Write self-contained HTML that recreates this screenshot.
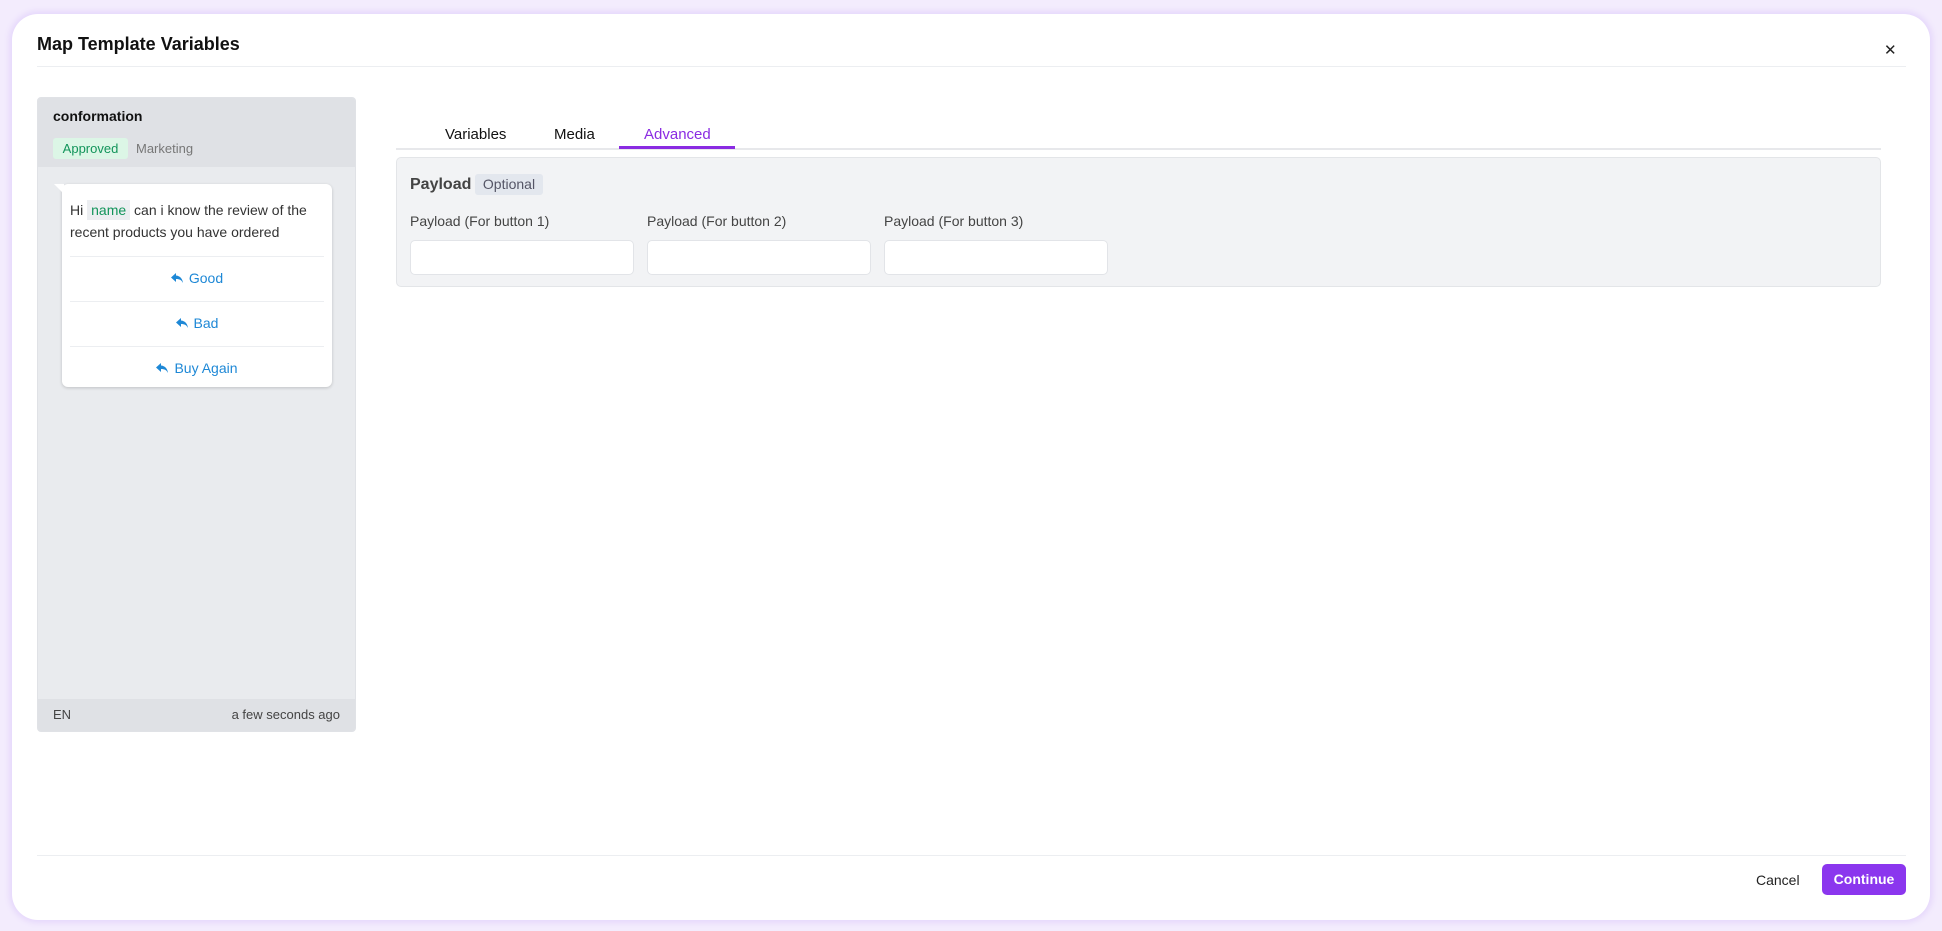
<!DOCTYPE html>
<html><head><meta charset="utf-8"><style>
*{box-sizing:border-box;margin:0;padding:0}
body{width:1942px;height:931px;background:#f3ecfd;font-family:"Liberation Sans",sans-serif;position:relative;overflow:hidden}
.modal{position:absolute;left:12px;top:14px;width:1918px;height:906px;background:#fff;border-radius:26px;box-shadow:0 0 6px 3px #e6d8fb}
.a{position:absolute}
.title{left:37px;top:34px;font-size:18px;font-weight:bold;color:#111}
.x{left:1884px;top:41px;font-size:15px;color:#222}
.hr{height:1px;background:#eceef1}
.card{left:37px;top:97px;width:319px;height:635px;background:#e9ebee;border:1px solid #e0e2e6;border-radius:4px;overflow:hidden}
.chead{left:0;top:0;width:100%;height:69px;background:#dfe1e5}
.cfoot{left:0;bottom:0;width:100%;height:32px;background:#dfe1e5;font-size:13px;color:#444}
.bubble{left:24px;top:86px;width:270px;height:203px;background:#fff;border-radius:6px;box-shadow:0 1px 3px rgba(0,0,0,.18)}
.btxt{font-size:14px;color:#333;line-height:22px}
.btn{left:8px;width:254px;text-align:center;font-size:14px;color:#1e88d6}
.btn svg{vertical-align:-1px;margin-right:6px}
.tab{font-size:15px;color:#111;top:126px}
.panel{left:396px;top:157px;width:1485px;height:130px;background:#f2f3f5;border:1px solid #e3e5e8;border-radius:5px}
.lbl{font-size:14px;color:#444;top:55px}
.inp{top:82px;width:224px;height:35px;background:#fff;border:1px solid #e2e4e8;border-radius:5px}
</style></head><body>
<div class="modal"></div>
<div class="a title">Map Template Variables</div>
<div class="a x">✕</div>
<div class="a hr" style="left:37px;top:66px;width:1869px"></div>
<div class="a card">
 <div class="a chead">
  <div class="a" style="left:15px;top:10px;font-size:14px;font-weight:bold;color:#111">conformation</div>
  <div class="a" style="left:15px;top:40px;width:75px;height:21px;background:#dcf6e6;border-radius:3px;color:#12945a;font-size:13px;line-height:21px;text-align:center">Approved</div>
  <div class="a" style="left:98px;top:43px;font-size:13px;color:#777">Marketing</div>
 </div>
 <div class="a bubble">
  <div class="a" style="left:-8px;top:0;width:0;height:0;border-top:10px solid #fff;border-left:10px solid transparent"></div>
  <div class="a btxt" style="left:8px;top:15px;width:262px">Hi <span style="background:#eceef1;color:#12945a;padding:2px 4px">name</span> can i know the review of the recent products you have ordered</div>
  <div class="a hr" style="left:8px;top:72px;width:254px"></div>
  <div class="a btn" style="top:86px"><svg width="12" height="11" viewBox="0 0 12 11"><path d="M5 0L0 4.5 5 9V6c3.5 0 5.5 1 7 4-.5-4-2.5-7-7-7.5z" fill="#1e88d6"/></svg>Good</div>
  <div class="a hr" style="left:8px;top:117px;width:254px"></div>
  <div class="a btn" style="top:131px"><svg width="12" height="11" viewBox="0 0 12 11"><path d="M5 0L0 4.5 5 9V6c3.5 0 5.5 1 7 4-.5-4-2.5-7-7-7.5z" fill="#1e88d6"/></svg>Bad</div>
  <div class="a hr" style="left:8px;top:162px;width:254px"></div>
  <div class="a btn" style="top:176px"><svg width="12" height="11" viewBox="0 0 12 11"><path d="M5 0L0 4.5 5 9V6c3.5 0 5.5 1 7 4-.5-4-2.5-7-7-7.5z" fill="#1e88d6"/></svg>Buy Again</div>
 </div>
 <div class="a cfoot"><span class="a" style="left:15px;top:8px">EN</span><span class="a" style="right:15px;top:8px">a few seconds ago</span></div>
</div>
<div class="a tab" style="left:445px">Variables</div>
<div class="a tab" style="left:554px">Media</div>
<div class="a tab" style="left:644px;color:#8a2be2">Advanced</div>
<div class="a" style="left:396px;top:148px;width:1485px;height:2px;background:#e7e8eb"></div>
<div class="a" style="left:619px;top:146px;width:116px;height:3px;background:#8a2be2"></div>
<div class="a panel">
 <div class="a" style="left:13px;top:18px;font-size:16px;font-weight:bold;color:#444">Payload</div>
 <div class="a" style="left:78px;top:16px;width:68px;height:21px;background:#e3e7ee;border-radius:3px;font-size:14px;color:#556;line-height:21px;text-align:center">Optional</div>
 <div class="a lbl" style="left:13px">Payload (For button 1)</div>
 <div class="a lbl" style="left:250px">Payload (For button 2)</div>
 <div class="a lbl" style="left:487px">Payload (For button 3)</div>
 <div class="a inp" style="left:13px"></div>
 <div class="a inp" style="left:250px"></div>
 <div class="a inp" style="left:487px"></div>
</div>
<div class="a hr" style="left:37px;top:855px;width:1869px"></div>
<div class="a" style="left:1756px;top:872px;font-size:14px;color:#222">Cancel</div>
<div class="a" style="left:1822px;top:864px;width:84px;height:31px;background:#8b36ee;border-radius:5px;color:#fff;font-size:14px;font-weight:bold;line-height:31px;text-align:center">Continue</div>
</body></html>
